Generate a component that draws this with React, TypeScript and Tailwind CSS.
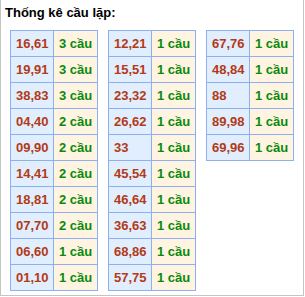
import React from "react";

type Row = { pair: string; count: number };

const col1: Row[] = [
  { pair: "16,61", count: 3 },
  { pair: "19,91", count: 3 },
  { pair: "38,83", count: 3 },
  { pair: "04,40", count: 2 },
  { pair: "09,90", count: 2 },
  { pair: "14,41", count: 2 },
  { pair: "18,81", count: 2 },
  { pair: "07,70", count: 2 },
  { pair: "06,60", count: 1 },
  { pair: "01,10", count: 1 },
];

const col2: Row[] = [
  "12,21",
  "15,51",
  "23,32",
  "26,62",
  "33",
  "45,54",
  "46,64",
  "36,63",
  "68,86",
  "57,75",
].map((pair) => ({ pair, count: 1 }));

const col3: Row[] = ["67,76", "48,84", "88", "89,98", "69,96"].map((pair) => ({
  pair,
  count: 1,
}));

const PairTable: React.FC<{ rows: Row[] }> = ({ rows }) => (
  <div className="w-[88px] border-l border-t border-[#8cb0f2]">
    {rows.map((r) => (
      <div key={r.pair} className="flex h-[26px]">
        <div className="w-[43px] flex items-center pl-[5px] bg-[#e1eefd] border-r border-b border-[#8cb0f2] text-[#b23a18]">
          {r.pair}
        </div>
        <div className="w-[44px] flex items-center pl-[5px] bg-[#fff4e1] border-r border-b border-[#8cb0f2] text-[#0a8a0a]">
          {r.count} cầu
        </div>
      </div>
    ))}
  </div>
);

export default function App() {
  return (
    <div
      className="w-[304px] h-[296px] bg-white border-l border-r border-b border-[#c4c4c4] font-bold text-[13px]"
      style={{ fontFamily: '"Liberation Sans", Arial, sans-serif' }}
    >
      <div className="pt-[5px] pl-[4px] leading-[16px] text-black">
        Thống kê cầu lặp:
      </div>
      <div className="flex items-start gap-[10px] pl-[9px] mt-[9px]">
        <PairTable rows={col1} />
        <PairTable rows={col2} />
        <PairTable rows={col3} />
      </div>
    </div>
  );
}
